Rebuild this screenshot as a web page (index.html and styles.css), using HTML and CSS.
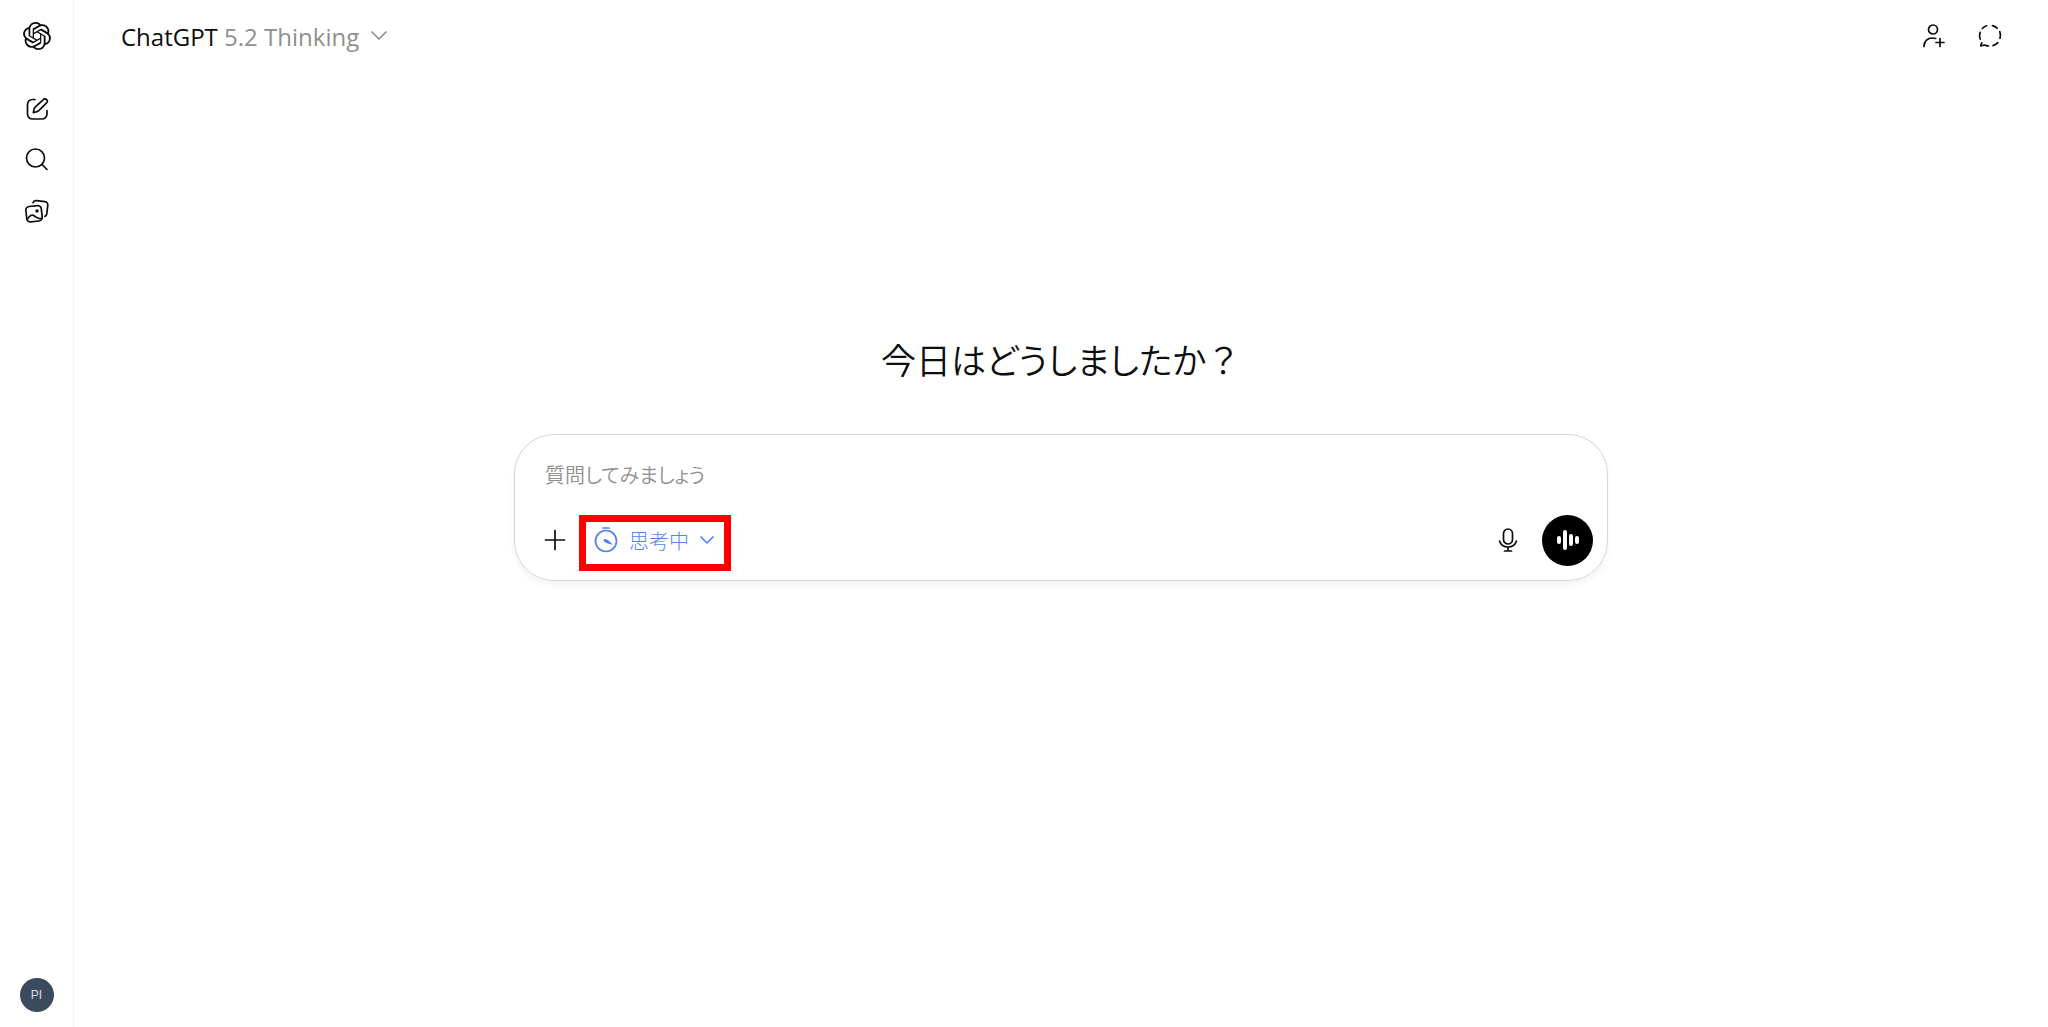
FILE: index.html
```
<!DOCTYPE html>
<html lang="ja">
<head>
    <meta charset="UTF-8">
    <meta name="viewport" content="width=device-width, initial-scale=1.0">
    <title>ChatGPT</title>
    <link rel="stylesheet" href="styles.css">
</head>
<body>
    <!-- サイドバー -->
    <nav class="sidebar">
        <a class="logo" href="#" aria-label="ChatGPT">
            <svg width="28" height="28" viewBox="0 0 24 24" fill="currentColor"><path d="M22.2819 9.8211a5.9847 5.9847 0 0 0-.5157-4.9108 6.0462 6.0462 0 0 0-6.5098-2.9A6.0651 6.0651 0 0 0 4.9807 4.1818a5.9847 5.9847 0 0 0-3.9977 2.9 6.0462 6.0462 0 0 0 .7427 7.0966 5.98 5.98 0 0 0 .511 4.9107 6.051 6.051 0 0 0 6.5146 2.9001A5.9847 5.9847 0 0 0 13.2599 24a6.0557 6.0557 0 0 0 5.7718-4.2058 5.9894 5.9894 0 0 0 3.9977-2.9001 6.0557 6.0557 0 0 0-.7475-7.073zm-9.022 12.6081a4.4755 4.4755 0 0 1-2.8764-1.0408l.1419-.0804 4.7783-2.7582a.7948.7948 0 0 0 .3927-.6813v-6.7369l2.02 1.1686a.071.071 0 0 1 .038.0615v5.5826a4.504 4.504 0 0 1-4.4945 4.4849zm-9.6607-4.1254a4.4708 4.4708 0 0 1-.5346-3.0137l.142.0852 4.783 2.7582a.7712.7712 0 0 0 .7806 0l5.8428-3.3685v2.3324a.0804.0804 0 0 1-.0332.0615L9.74 19.9502a4.4992 4.4992 0 0 1-6.1408-1.6464zM2.3408 7.8956a4.485 4.485 0 0 1 2.3655-1.9728V11.6a.7664.7664 0 0 0 .3879.6765l5.8144 3.3543-2.0201 1.1685a.0757.0757 0 0 1-.071 0l-4.8303-2.7865A4.504 4.504 0 0 1 2.3408 7.8956zm16.5963 3.8558L13.1038 8.364 15.1192 7.2a.0757.0757 0 0 1 .071 0l4.8303 2.7913a4.4944 4.4944 0 0 1-.6765 8.1042v-5.6772a.79.79 0 0 0-.407-.667zm2.0107-3.0231l-.142-.0852-4.7735-2.7818a.7759.7759 0 0 0-.7854 0L9.409 9.2297V6.8974a.0662.0662 0 0 1 .0284-.0615l4.8303-2.7866a4.4992 4.4992 0 0 1 6.6802 4.66zM8.3065 12.863l-2.02-1.1638a.0804.0804 0 0 1-.038-.0567V6.0742a4.4992 4.4992 0 0 1 7.3757-3.4537l-.142.0805L8.704 5.459a.7948.7948 0 0 0-.3927.6813zm1.0976-2.3654l2.602-1.4998 2.6069 1.4998v2.9994l-2.5974 1.4997-2.6067-1.4997Z"/></svg>
        </a>
        <div class="menu">
            <button aria-label="新しいチャット">
                <svg class="icon" width="24" height="24" viewBox="0 0 24 24"><path d="M10 2.500H7.500a5 5 0 0 0-5 5V17a5 5 0 0 0 5 5H17a5 5 0 0 0 5-5v-3.500"/><path d="M18.300 2.600a2.300 2.300 0 0 1 3.300 0 2.300 2.300 0 0 1 0 3.200l-7.800 7.800a4 4 0 0 1-2 1.100l-3.500.9.800-3.500a4 4 0 0 1 1.100-2Z"/></svg>
            </button>
            <button aria-label="チャットを検索">
                <svg class="icon" width="24" height="24" viewBox="0 0 24 24"><circle cx="10.500" cy="10" r="9"/><path d="M17 16.500l5 5"/></svg>
            </button>
            <button aria-label="画像">
                <svg class="icon" width="24" height="24" viewBox="0 0 24 24"><rect x="1.300" y="7" width="15.500" height="15.500" rx="3.500" transform="rotate(-6 9 15)"/><path d="M8 3.800a3.200 3.200 0 0 1 3.400-2.200l8.500 1a3.200 3.200 0 0 1 2.900 3.500l-1 8.800a3.200 3.200 0 0 1-1.900 2.500"/><path d="M2.500 20c2-3.500 4.500-4.800 7-3s3.500 3.600 7.500 2.200"/><circle class="dot" cx="12" cy="12" r="1.700"/></svg>
            </button>
        </div>
        <button class="avatar" aria-label="アカウント">PI</button>
    </nav>

    <main class="main">
        <header class="header">
            <button class="model">
                <span>ChatGPT <span class="version">5.2 Thinking</span></span>
                <svg class="chevron" width="16" height="10" viewBox="0 0 16 10"><path d="M1 1l7 7 7-7"/></svg>
            </button>
            <div class="actions">
                <button aria-label="グループチャットを開始">
                    <svg class="icon" width="24" height="24" viewBox="0 0 24 24"><circle cx="11" cy="5.500" r="4.500"/><path d="M2 22.500c0-5.500 3.800-8.500 8.500-8.500 1.200 0 2.200.2 3.200.5M18 14.500v8M14 18.500h8"/></svg>
                </button>
                <button aria-label="一時チャット">
                    <svg class="icon" width="24" height="24" viewBox="0 0 24 24"><path d="M8.500 1.800a11 11 0 0 0-4.200 2.700M2.100 8.300a11 11 0 0 0 .1 6.800M14.500 1.600a11 11 0 0 1 4.700 2.600M21.800 7.600a11 11 0 0 1 .2 6.600M19.800 18.600a11 11 0 0 1-4.800 3M10.500 22c-1.500 0-2.500-.6-3.700-1l-4.100.8 1-3"/></svg>
                </button>
            </div>
        </header>

        <section class="content">
            <h1>今日はどうしましたか<span class="full">？</span></h1>
            <form class="composer">
                <input type="text" placeholder="質問してみましょう" aria-label="質問してみましょう">
                <div class="toolbar">
                    <button type="button" class="tool" aria-label="追加">
                        <svg class="icon" width="24" height="24" viewBox="0 0 24 24"><path d="M12 2.500v19M2.500 12h19"/></svg>
                    </button>
                    <button type="button" class="thinking">
                        <svg class="icon" width="24" height="28" viewBox="0 0 24 28"><circle cx="12" cy="15" r="10.500"/><path d="M9 2h6"/><path class="dot" d="M10.600 13c1.500-.7 5.400 2.200 8 5.600-3.700-.3-7.900-1.800-8.700-3.300-.6-1-.2-2 .7-2.300z"/></svg>
                        <span>思考中</span>
                        <svg class="chevron" width="14" height="9" viewBox="0 0 14 9"><path d="M1 1l6 6 6-6"/></svg>
                    </button>
                    <button type="button" class="tool mic" aria-label="音声入力">
                        <svg class="icon" width="20" height="24" viewBox="0 0 20 24"><rect x="5.500" y="1" width="9" height="15" rx="4.500"/><path d="M1.500 13c1.200 4 4.500 6 8.500 6s7.300-2 8.500-6M10 19v4M6.500 23h7"/></svg>
                    </button>
                    <button type="button" class="voice" aria-label="音声モード">
                        <svg width="24" height="24" viewBox="0 0 24 24" fill="currentColor"><rect x="1" y="8" width="4" height="8" rx="2"/><rect x="7" y="2" width="4" height="20" rx="2"/><rect x="13" y="6" width="4" height="12" rx="2"/><rect x="19" y="8" width="4" height="8" rx="2"/></svg>
                    </button>
                </div>
            </form>
        </section>
    </main>
</body>
</html>
```
FILE: styles.css
```
* {
    box-sizing: border-box;
}
body {
    margin: 0;
    display: flex;
    min-height: 100vh;
    background-color: #fff;
    color: #0d0d0d;
    font-family: "Open Sans", "Noto Sans CJK JP", sans-serif;
}
button {
    display: flex;
    align-items: center;
    justify-content: center;
    padding: 0;
    border: none;
    background: none;
    color: inherit;
    font: inherit;
    cursor: pointer;
}
svg {
    display: block;
    flex: none;
}
.icon,
.chevron {
    fill: none;
    stroke: currentColor;
    stroke-width: 1.7;
    stroke-linecap: round;
    stroke-linejoin: round;
}
.icon .dot {
    fill: currentColor;
    stroke: none;
}

/* サイドバー */
.sidebar {
    display: flex;
    flex-direction: column;
    align-items: center;
    flex: none;
    width: 74px;
    padding: 13px 0 15px;
    border-right: 1px solid #f3f3f0;
}
.logo {
    display: flex;
    align-items: center;
    height: 45px;
    color: inherit;
}
.menu {
    margin-top: 25px;
}
.menu button {
    width: 51px;
    height: 51px;
}
.avatar {
    width: 34px;
    height: 34px;
    margin-top: auto;
    border-radius: 50%;
    background-color: #3c4a5e;
    color: #d8dce2;
    font-family: "Liberation Sans", sans-serif;
    font-size: 12px;
}

/* メイン */
.main {
    flex: 1;
    min-width: 0;
}
.header {
    display: flex;
    align-items: center;
    justify-content: space-between;
    height: 72px;
    padding: 0 34px 0 47px;
}
.model {
    gap: 12px;
    font-size: 24px;
}
.version,
.model .chevron {
    color: #8f8f8f;
}
.actions {
    display: flex;
    gap: 8px;
}
.actions button {
    width: 48px;
    height: 48px;
}
.content {
    max-width: 1126px;
    margin: 0 auto;
    padding: 261px 16px 40px;
}
h1 {
    margin: 0 0 45px;
    font-size: 35px;
    font-weight: 350;
    line-height: 56px;
    text-align: center;
    font-feature-settings: "palt";
}
h1 .full {
    font-feature-settings: normal;
}
.composer {
    padding: 24px 14px 15px 23px;
    border: 1px solid #d6d6d6;
    border-radius: 40px;
    box-shadow: 0 4px 6px rgba(0, 0, 0, 0.05);
}
.composer input {
    display: block;
    width: 100%;
    height: 32px;
    margin-bottom: 24px;
    padding: 0 7px;
    border: none;
    outline: none;
    background: none;
    color: inherit;
    font: inherit;
    font-size: 20px;
    font-weight: 350;
    font-feature-settings: "palt";
}
.composer input::placeholder {
    color: #8f8f8f;
    opacity: 1;
}
.toolbar {
    display: flex;
    align-items: center;
    height: 50px;
}
.tool {
    width: 34px;
    height: 50px;
}
.thinking {
    position: relative;
    height: 50px;
    margin-left: 14px;
    padding: 0 8px;
    gap: 11px;
    color: #4f83f7;
    font-size: 20px;
    font-weight: 300;
}
/* 強調用の赤枠 */
.thinking::after {
    content: "";
    position: absolute;
    inset: 0 -9px -6px -7px;
    border: 7px solid #f00;
}
.mic {
    margin-left: auto;
    margin-right: 17px;
}
.voice {
    width: 51px;
    height: 51px;
    border-radius: 50%;
    background-color: #000;
    color: #fff;
}
```
